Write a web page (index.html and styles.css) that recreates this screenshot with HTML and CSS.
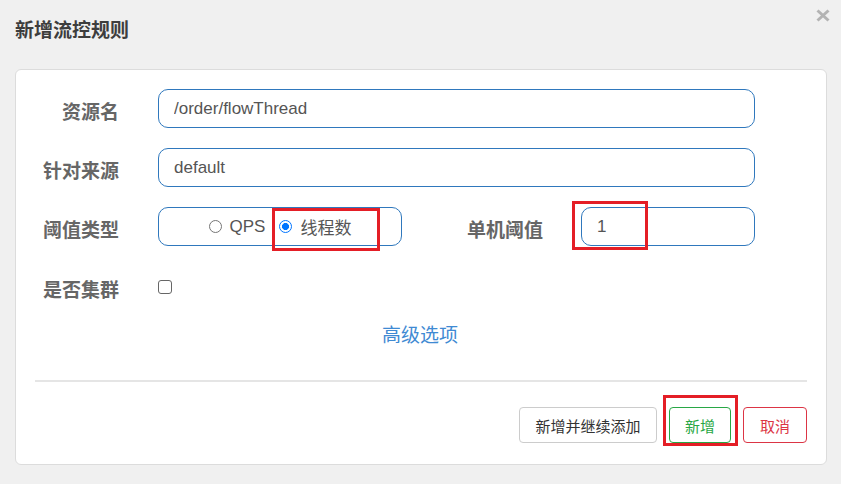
FILE: index.html
```html
<!DOCTYPE html>
<html lang="zh">
<head>
<meta charset="utf-8">
<title>新增流控规则</title>
<link rel="stylesheet" href="styles.css">
</head>
<body>
<div class="page">
  <header class="dlg-head">
    <h1 class="title">新增流控规则</h1>
    <span class="close" aria-label="close">
      <svg width="14" height="13" viewBox="0 0 14 13"><path d="M1.5 1.5 L12.5 11.5 M12.5 1.5 L1.5 11.5" stroke="#b3b3b3" stroke-width="3" fill="none"/></svg>
    </span>
  </header>
  <div class="card">
    <div class="row">
      <label class="lbl">资源名</label>
      <input class="field wide" value="/order/flowThread">
    </div>
    <div class="row">
      <label class="lbl">针对来源</label>
      <input class="field wide" value="default">
    </div>
    <div class="row">
      <label class="lbl">阈值类型</label>
      <div class="radio-box">
        <label class="radio"><input type="radio" name="grade">QPS</label>
        <label class="radio"><input type="radio" name="grade" checked>线程数</label>
        <span class="mark mark-radio"></span>
      </div>
      <label class="lbl lbl-mid">单机阈值</label>
      <div class="num-wrap">
        <input class="field num" value="1">
        <span class="mark mark-num"></span>
      </div>
    </div>
    <div class="row row-check">
      <label class="lbl">是否集群</label>
      <span class="checkbox"></span>
    </div>
    <div class="adv"><a class="adv-link">高级选项</a></div>
    <hr class="divider">
    <div class="actions">
      <button class="btn btn-default">新增并继续添加</button>
      <span class="btn-wrap">
        <button class="btn btn-ok">新增</button>
        <span class="mark mark-btn"></span>
      </span>
      <button class="btn btn-cancel">取消</button>
    </div>
  </div>
</div>
</body>
</html>
```

FILE: styles.css
```css
* { box-sizing: border-box; }
html, body {
  margin: 0;
  padding: 0;
  background: #f0f0f0;
}
body {
  font-family: "Liberation Sans", "Noto Sans CJK SC", sans-serif;
  color: #555;
}
.page {
  padding: 0 14px 0 15px;
  width: 841px;
  height: 484px;
}
.dlg-head {
  height: 69px;
  display: flex;
  justify-content: space-between;
  align-items: flex-start;
}
.title {
  margin: 19px 0 0 0;
  font-size: 19px;
  line-height: 20px;
  font-weight: bold;
  color: #3d3d3d;
  font-family: "Noto Sans CJK SC", sans-serif;
}
.close {
  display: block;
  margin-top: 9px;
  margin-right: -3px;
  width: 14px;
  height: 13px;
}
.close svg { display: block; }
.card {
  background: #fff;
  border: 1px solid #dcdcdc;
  border-radius: 6px;
  padding: 19px 19px 20px 19px;
  height: 396px;
}
.row {
  display: flex;
  align-items: center;
  height: 39px;
  margin-bottom: 20px;
}
.lbl {
  width: 84px;
  margin-right: 39px;
  text-align: right;
  font-family: "Noto Sans CJK SC", sans-serif;
  font-weight: bold;
  font-size: 19px;
  color: #666;
  padding-top: 4px;
}
.field {
  height: 39px;
  border: 1px solid #2f78bd;
  border-radius: 10px;
  padding: 0 15px;
  font-family: "Liberation Sans", "Noto Sans CJK SC", sans-serif;
  font-size: 17px;
  color: #555;
  background: #fff;
  outline: none;
}
.wide { width: 597px; }
.radio-box {
  position: relative;
  width: 244px;
  height: 39px;
  border: 1px solid #2f78bd;
  border-radius: 10px;
  display: flex;
  justify-content: center;
  align-items: center;
  gap: 14px;
  padding-left: 0;
}
.radio {
  display: flex;
  align-items: center;
  gap: 8px;
  font-size: 17px;
  color: #555;
  font-family: "Liberation Sans", "Noto Sans CJK SC", sans-serif;
}
.radio input {
  -webkit-appearance: none;
  appearance: none;
  margin: 0;
  width: 13px;
  height: 13px;
  border: 1px solid #767676;
  border-radius: 50%;
  background: #fff;
  flex: none;
}
.radio input:checked {
  border: 1.5px solid #0075ff;
  background: radial-gradient(circle, #0075ff 0, #0075ff 3.2px, #fff 3.8px);
}
.lbl-mid {
  width: 141px;
  margin-right: 38px;
}
.num-wrap { position: relative; }
.num { width: 174px; display: block; }
.row-check {
  height: 40px;
  margin-bottom: 0;
}
.checkbox {
  display: block;
  width: 14px;
  height: 14px;
  border: 1px solid #666;
  border-radius: 3px;
  margin-top: 1px;
}
.adv {
  height: 50px;
  padding-top: 4px;
  display: flex;
  justify-content: center;
  align-items: center;
}
.adv-link {
  font-family: "Noto Sans CJK SC", sans-serif;
  font-size: 19px;
  color: #3f8ad3;
  padding-right: 2px;
}
.divider {
  margin: 24px 0 0 0;
  border: 0;
  height: 2px;
  background: #e5e5e5;
}
.actions {
  margin-top: 25px;
  display: flex;
  justify-content: flex-end;
  gap: 12px;
}
.btn {
  height: 36px;
  padding: 0;
  background: #fff;
  border: 1px solid #ccc;
  border-radius: 4px;
  font-family: "Noto Sans CJK SC", sans-serif;
  font-size: 15px;
  color: #333;
  display: block;
  white-space: nowrap;
  text-align: center;
}
.btn-ok {
  border-color: #28a745;
  color: #28a745;
  width: 62px;
}
.btn-cancel {
  border-color: #dc3545;
  color: #dc3545;
  width: 64px;
}
.btn-default { width: 138px; }
.btn-wrap { position: relative; display: block; }
.mark {
  position: absolute;
  border: 3px solid #e41e26;
  pointer-events: none;
}
.mark-radio {
  left: 113px;
  top: 0px;
  width: 108px;
  height: 43px;
}
.mark-num {
  left: -9px;
  top: -6px;
  width: 76px;
  height: 49px;
}
.mark-btn {
  left: -6px;
  top: -12px;
  width: 75px;
  height: 51px;
}
```
